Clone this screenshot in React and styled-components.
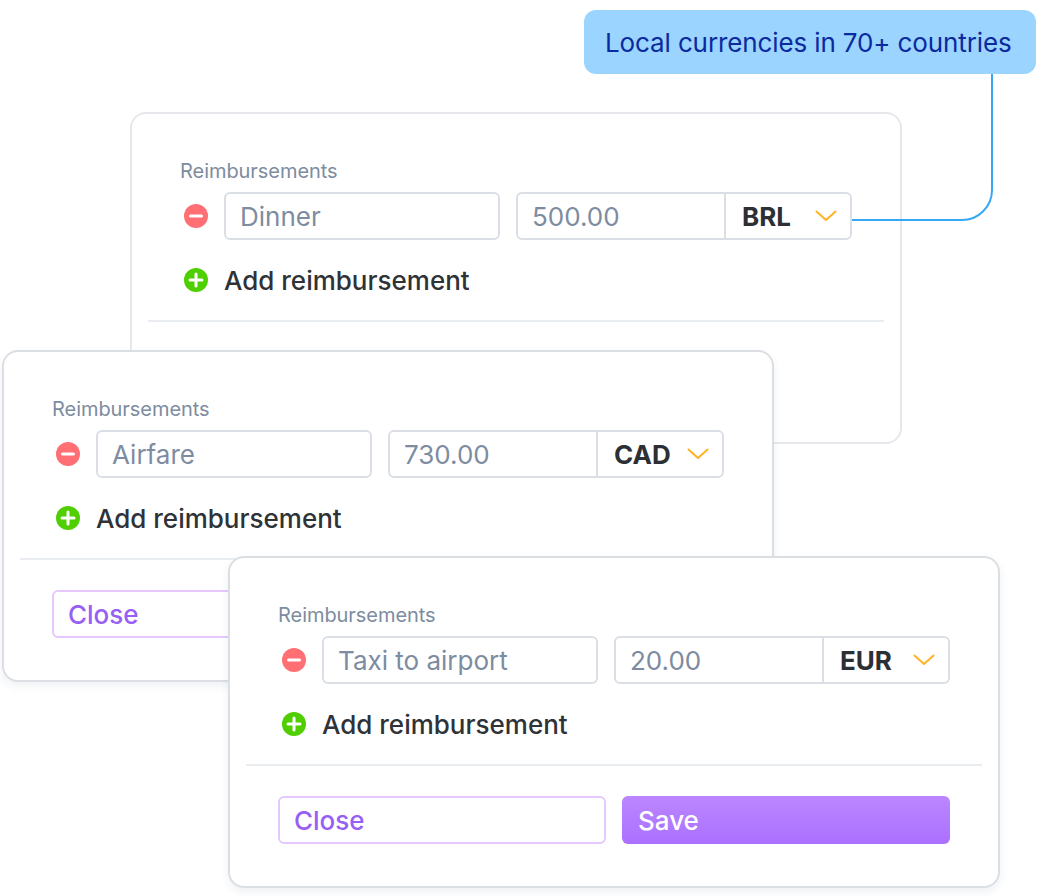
import React from "react";
import styled, { createGlobalStyle } from "styled-components";

const Global = createGlobalStyle`
  html, body { margin: 0; padding: 0; background: #fff; }
  body { font-family: "Inter", "Liberation Sans", sans-serif; }
`;

const Canvas = styled.div`
  position: relative;
  width: 1040px;
  height: 896px;
  overflow: hidden;
  background: #fff;
`;

const Card = styled.section`
  position: absolute;
  left: ${(p) => p.$x}px;
  top: ${(p) => p.$y}px;
  z-index: ${(p) => p.$z};
  box-sizing: border-box;
  width: 772px;
  height: 332px;
  padding: 46px 16px 0;
  background: #fff;
  border: 2px solid ${(p) => (p.$raised ? "#dbdfe4" : "#e6e8ec")};
  border-radius: 16px;
  box-shadow: ${(p) => (p.$raised ? "0 4px 8px rgba(30, 50, 90, 0.07)" : "none")};
`;

const Fields = styled.div`
  padding: 0 32px;
`;

const Label = styled.div`
  font-size: 20px;
  line-height: 22px;
  letter-spacing: -0.05px;
  color: #7d8ca0;
  margin-bottom: 10px;
`;

const Row = styled.div`
  display: flex;
  align-items: center;
`;

const RoundIcon = styled.svg`
  flex: none;
  width: 24px;
  height: 24px;
  margin: 0 16px 0 4px;
`;

const TextBox = styled.div`
  box-sizing: border-box;
  width: 276px;
  height: 48px;
  padding: 0 14px;
  border: 2px solid #dadfe5;
  border-radius: 6px;
  font-size: 26px;
  line-height: 46px;
  color: #7d8ca0;
`;

const MoneyBox = styled.div`
  display: flex;
  box-sizing: border-box;
  width: 336px;
  height: 48px;
  margin-left: 16px;
  border: 2px solid #dadfe5;
  border-radius: 6px;
`;

const Amount = styled.div`
  flex: 1;
  padding: 0 14px;
  font-size: 26px;
  line-height: 46px;
  color: #7d8ca0;
`;

const Currency = styled.div`
  display: flex;
  align-items: center;
  justify-content: space-between;
  box-sizing: border-box;
  width: 126px;
  padding: 0 13px 0 16px;
  border-left: 2px solid #dadfe5;
  font-size: 26px;
  font-weight: 700;
  color: #2c2f33;
`;

const Chevron = styled.svg`
  width: 22px;
  height: 12px;
`;

const AddRow = styled(Row)`
  height: 48px;
  margin-top: 16px;
  font-size: 26px;
  font-weight: 500;
  color: #2f3236;
`;

const Divider = styled.hr`
  height: 2px;
  margin: 16px 0 0;
  border: 0;
  background: #e9edf2;
`;

const Actions = styled.div`
  display: grid;
  grid-template-columns: 328px 328px;
  gap: 16px;
  padding: 30px 32px 0;
`;

const Button = styled.div`
  box-sizing: border-box;
  height: 48px;
  padding: 0 14px;
  border-radius: 6px;
  font-size: 26px;
  line-height: 46px;
  font-weight: 500;
  border: 2px solid #e6c8ff;
  color: #9660f5;
`;

const SaveButton = styled(Button)`
  border: 0;
  padding: 0 16px;
  line-height: 50px;
  color: #fff;
  background: linear-gradient(180deg, #bb86ff 0%, #ab70ff 100%);
`;

const Tag = styled.div`
  position: absolute;
  left: 584px;
  top: 10px;
  z-index: 5;
  box-sizing: border-box;
  width: 452px;
  height: 64px;
  padding: 0 21px;
  border-radius: 12px;
  background: #9bd4ff;
  color: #0a2a9e;
  font-size: 26px;
  letter-spacing: -0.12px;
  line-height: 65px;
  white-space: nowrap;
`;

const Connector = styled.svg`
  position: absolute;
  left: 850px;
  top: 72px;
  z-index: 4;
  width: 146px;
  height: 152px;
`;

const Entry = ({ x, y, z, raised, name, amount, code, close, save }) => (
  <Card $x={x} $y={y} $z={z} $raised={raised}>
    <Fields>
      <Label>Reimbursements</Label>
      <Row>
        <RoundIcon viewBox="0 0 24 24">
          <circle cx="12" cy="12" r="12" fill="#ff6f73" />
          <path d="M6.500 12h11" stroke="#fff" strokeWidth="3" strokeLinecap="round" />
        </RoundIcon>
        <TextBox>{name}</TextBox>
        <MoneyBox>
          <Amount>{amount}</Amount>
          <Currency>
            {code}
            <Chevron viewBox="0 0 22 12">
              <path d="M1.500 1.500 11 10l9.500-8.500" fill="none" stroke="#ffb224" strokeWidth="2" strokeLinecap="round" strokeLinejoin="round" />
            </Chevron>
          </Currency>
        </MoneyBox>
      </Row>
      <AddRow>
        <RoundIcon viewBox="0 0 24 24">
          <circle cx="12" cy="12" r="12" fill="#4fcf00" />
          <path d="M12 6v12M6 12h12" stroke="#fff" strokeWidth="3" strokeLinecap="round" />
        </RoundIcon>
        Add reimbursement
      </AddRow>
    </Fields>
    <Divider />
    {close && (
      <Actions>
        <Button>Close</Button>
        {save && <SaveButton>Save</SaveButton>}
      </Actions>
    )}
  </Card>
);

export default function App() {
  return (
    <Canvas>
      <Global />
      <Tag>Local currencies in 70+ countries</Tag>
      <Connector viewBox="0 0 146 152">
        <path d="M142 0V118a30 30 0 0 1-30 30H2" fill="none" stroke="#35a7f5" strokeWidth="2" />
      </Connector>
      <Entry x={130} y={112} z={1} name="Dinner" amount="500.00" code="BRL" />
      <Entry x={2} y={350} z={2} raised close name="Airfare" amount="730.00" code="CAD" />
      <Entry x={228} y={556} z={3} raised close save name="Taxi to airport" amount="20.00" code="EUR" />
    </Canvas>
  );
}
